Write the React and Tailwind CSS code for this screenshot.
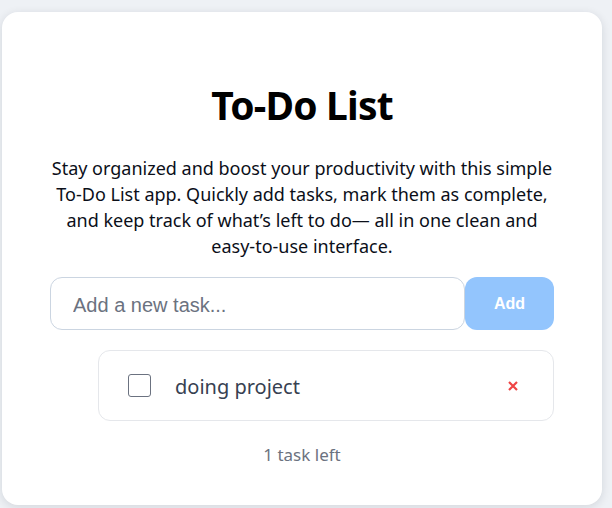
export default function App() {
  return (
    <div className="min-h-screen bg-[#eef1f5] pt-3 pl-[2px]" style={{ fontFamily: '"Noto Sans", "Open Sans", sans-serif' }}>
      <div className="w-[600px] h-[493px] bg-white rounded-2xl shadow-[0_2px_10px_rgba(15,23,42,0.12)] px-12 pt-[69px] flex flex-col items-center">
        <h1 className="text-[39px] leading-[48px] font-bold tracking-[-0.8px] text-black">To-Do List</h1>

        <p className="mt-[26px] text-[18px] leading-[26px] text-[#0b0f19] text-center">
          Stay organized and boost your productivity with this simple To-Do List app. Quickly add tasks, mark them as complete, and keep track of what’s left to do— all in one clean and easy-to-use interface.
        </p>

        <div className="mt-[18px] w-full flex h-[53px]" style={{ fontFamily: '"Liberation Sans", Arial, sans-serif' }}>
          <input
            type="text"
            placeholder="Add a new task..."
            className="flex-1 min-w-0 h-full border border-[#cbd5e1] rounded-xl px-[22px] pt-[3px] text-xl text-[#111827] placeholder:text-[#6b7280] outline-none"
          />
          <button className="w-[89px] h-full rounded-xl bg-[#93c5fd] text-white font-bold text-base">Add</button>
        </div>

        <ul className="mt-5 w-full pl-12">
          <li className="h-[71px] flex items-center border border-[#e5e7eb] rounded-xl pl-[29px] pr-[35px]">
            <span className="w-[23px] h-[23px] border border-[#6b7280] rounded-[3px] shrink-0" />
            <span className="ml-6 flex-1 pt-[3px] text-xl text-[#374151]">doing project</span>
            <svg width="10" height="10" viewBox="0 0 10 10" className="text-[#ef4444]">
              <path d="M1 1 L9 9 M9 1 L1 9" stroke="currentColor" strokeWidth="2.2" strokeLinecap="butt" />
            </svg>
          </li>
        </ul>

        <p className="mt-[22px] text-[17px] leading-6 text-[#6b7280]">1 task left</p>
      </div>
    </div>
  )
}
